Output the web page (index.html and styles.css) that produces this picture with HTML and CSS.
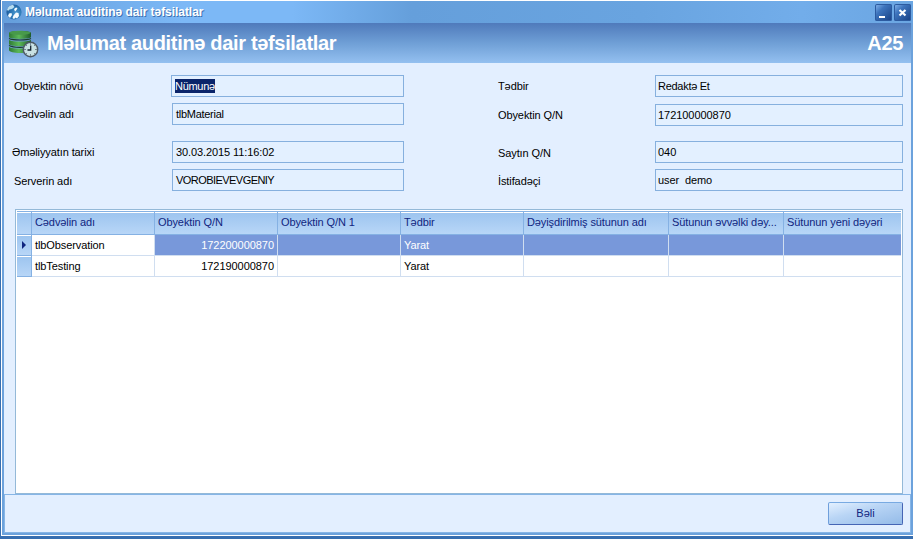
FILE: index.html
```html
<!DOCTYPE html>
<html lang="az">
<head>
<meta charset="utf-8">
<title>Məlumat auditinə dair təfsilatlar</title>
<link rel="stylesheet" href="styles.css">
</head>
<body>
<div class="window">
  <div class="titlebar">
    <svg class="app-icon" width="16" height="16" viewBox="0 0 16 16">
      <defs><radialGradient id="globe" cx="65%" cy="60%" r="65%"><stop offset="0" stop-color="#4d9bd0"/><stop offset=".6" stop-color="#2a76b4"/><stop offset="1" stop-color="#235c9c"/></radialGradient></defs>
      <circle cx="8" cy="8" r="7.6" fill="url(#globe)"/>
      <path d="M1 5.500C2 2.500 4.500 1 7 .8L8.500 3 6 5 3.500 5.500 2 7Z" fill="#b9ddf0"/>
      <path d="M8 5 10 3.500 11.500 4 10.500 6 9 7.500ZM3 9.500 5.500 9 6 11 4 14 2 12ZM7.500 11.500 10 8.500 12.500 9 13 12 11 14.500 9.500 13.500 8 15 6.500 14Z" fill="#f4fbff"/>
    </svg>
    <span class="title">Məlumat auditinə dair təfsilatlar</span>
    <div class="winbtns">
      <span class="winbtn"><svg width="17" height="17" viewBox="0 0 17 17"><path d="M4 12h6v2H4z" fill="#fff"/></svg></span>
      <span class="winbtn"><svg width="17" height="17" viewBox="0 0 17 17"><path d="M5.500 6 11.500 11.500M11.500 6 5.500 11.500" stroke="#fff" stroke-width="2.200"/></svg></span>
    </div>
  </div>
  <div class="banner">
    <svg class="db-icon" width="32" height="28" viewBox="0 0 32 28">
      <defs><linearGradient id="disk"><stop offset="0" stop-color="#2f7a35"/><stop offset=".45" stop-color="#5cb957"/><stop offset="1" stop-color="#1f5a2a"/></linearGradient></defs>
      <g fill="url(#disk)">
        <path d="M1 3C1 0 23 0 23 3V7C23 9.500 1 9.500 1 7Z"/>
        <path d="M1 10C5 12 19 12 23 10V14C23 17 1 17 1 14Z"/>
        <path d="M1 17C5 19 19 19 23 17V20C23 24 1 24 1 20Z"/>
      </g>
      <ellipse cx="12" cy="2.800" rx="10.500" ry="1.900" fill="#48994b"/>
      <path d="M1 8.500C5 10.500 19 10.500 23 8.500M1 15.500C5 18 19 18 23 15.500" fill="none" stroke="#193b2c" stroke-width="1.200"/>
      <circle cx="22.500" cy="19.500" r="7.200" fill="#c9e1e3" stroke="#4d5964" stroke-width="1.400"/>
      <path d="M22.500 13v2M22.500 24v2M16 19.500h2M27 19.500h2M18 15l1 1M27 15l-1 1M18 24l1-1M27 24l-1-1" stroke="#738790"/>
      <path d="M22.700 15.500V20H19.500" fill="none" stroke="#142331" stroke-width="1.300"/>
    </svg>
    <span class="heading">Məlumat auditinə dair təfsilatlar</span>
    <span class="code">A25</span>
  </div>
  <div class="form">
    <div class="fields left">
      <div class="field r1"><label>Obyektin növü</label><div class="input focus"><span class="sel">Nümunə</span></div></div>
      <div class="field r2"><label>Cədvəlin adı</label><div class="input tight">tlbMaterial</div></div>
      <div class="field r3"><label class="outdent">Əməliyyatın tarixi</label><div class="input">30.03.2015 11:16:02</div></div>
      <div class="field r4"><label class="low">Serverin adı</label><div class="input caps">VOROBIEVEVGENIY</div></div>
    </div>
    <div class="fields right">
      <div class="field r1"><label>Tədbir</label><div class="input tight">Redaktə Et</div></div>
      <div class="field r2"><label>Obyektin Q/N</label><div class="input digits">172100000870</div></div>
      <div class="field r3"><label class="low">Saytın Q/N</label><div class="input digits">040</div></div>
      <div class="field r4"><label class="low">İstifadəçi</label><div class="input pre">user  demo</div></div>
    </div>
  </div>
  <div class="table">
    <div class="row head">
      <div class="cell ind"></div><div class="cell">Cədvəlin adı</div><div class="cell">Obyektin Q/N</div><div class="cell">Obyektin Q/N 1</div><div class="cell">Tədbir</div><div class="cell">Dəyişdirilmiş sütunun adı</div><div class="cell">Sütunun əvvəlki dəy...</div><div class="cell">Sütunun yeni dəyəri</div>
    </div>
    <div class="row current">
      <div class="cell ind"><svg width="4" height="8" viewBox="0 0 4 8"><path d="M0 0 4 4 0 8Z" fill="#10257f"/></svg></div><div class="cell">tlbObservation</div><div class="cell num">172200000870</div><div class="cell"></div><div class="cell">Yarat</div><div class="cell"></div><div class="cell"></div><div class="cell"></div>
    </div>
    <div class="row">
      <div class="cell ind"></div><div class="cell">tlbTesting</div><div class="cell num">172190000870</div><div class="cell"></div><div class="cell">Yarat</div><div class="cell"></div><div class="cell"></div><div class="cell"></div>
    </div>
  </div>
  <div class="footer"><button class="ok">Bəli</button></div>
</div>
</body>
</html>
```
FILE: styles.css
```css
* { box-sizing: border-box; }
body {
  margin: 0;
  width: 913px;
  height: 539px;
  overflow: hidden;
  background: #376eb0;
  font: 11px/13px "Liberation Sans", Arial, sans-serif;
  letter-spacing: -0.1px;
  color: #000;
}
.window {
  display: flex;
  flex-direction: column;
  height: 536px;
  margin-left: 1px;
  border: 1px solid #fff;
  border-right: 0;
  background: linear-gradient(#e3efff, #e3efff) 2px 0 / 907px 532px no-repeat #6ca2dc;
}
.titlebar {
  display: flex;
  align-items: center;
  flex: none;
  height: 22px;
  padding: 0 2px 0 4px;
  background: linear-gradient(90deg, #659edb 0, #7cb8f6 180px, #7cb8f6 290px, #659fdb 410px, #69a4e0 640px, #72adea 800px, #6ba6e2 100%);
}
.title {
  margin-left: 3px;
  color: #fff;
  font-size: 12px;
  font-weight: bold;
  letter-spacing: -0.05px;
  text-shadow: 1px 1px #3e70b0;
}
.winbtns { display: flex; gap: 2px; margin-left: auto; }
.winbtn {
  width: 17px;
  height: 17px;
  border-radius: 2px;
  background: linear-gradient(135deg, #8bbaf0, #3d74bd 35%, #173f82);
  box-shadow: inset 0 0 0 1px #2c5ba0;
}
.winbtn svg { display: block; }
.banner {
  display: flex;
  align-items: center;
  flex: none;
  height: 40px;
  margin: 0 2px;
  padding: 0 8px 0 4px;
  background: linear-gradient(#4f7abb, #6f9fd6 50%, #94c0f0);
  color: #fff;
  font-size: 20px;
  line-height: 24px;
  font-weight: bold;
  letter-spacing: -0.33px;
}
.db-icon { margin-top: 2px; }
.heading { margin-left: 7px; }
.code { margin-left: auto; }
.form {
  display: flex;
  flex: none;
  height: 146px;
  padding: 12px 10px 0 12px;
}
.fields.left { width: 390px; margin-right: 94px; }
.fields.right { flex: 1; }
.field { display: flex; align-items: center; height: 22px; }
.field label { flex: 1; padding-top: 1px; }
.field .outdent { margin-left: -2px; margin-right: 2px; }
.field .low { padding-top: 3px; }
.input {
  width: 232px;
  height: 22px;
  padding: 4px 3px 0 2px;
  border: 1px solid #86b0de;
  background: #e3f0ff;
}
.right .input { width: 248px; }
.left .input { padding-left: 3px; }
.input.focus { width: 233px; padding-top: 3px; }
.tight { letter-spacing: -0.28px; }
.caps { letter-spacing: -0.55px; }
.digits, .num { letter-spacing: -0.05px; }
.pre { white-space: pre; }
.sel {
  display: inline-block;
  height: 14px;
  padding-top: 1px;
  background: #0a246a;
  color: #fff;
  letter-spacing: -0.3px;
}
.r2 { margin-top: 6px; }
.r3 { margin-top: 16px; }
.r4 { margin-top: 6px; }
.right .r2 { margin-top: 7px; }
.right .r3 { margin-top: 15px; }
.table {
  flex: none;
  width: 888px;
  height: 285px;
  margin-left: 13px;
  padding: 1px;
  border: 1px solid #94b9d8;
  background: #fff;
}
.row {
  display: grid;
  grid-template-columns: 15px 123px 123px 123px 123px 145px 115px 117px;
  height: 21px;
}
.cell {
  display: flex;
  align-items: center;
  min-width: 0;
  padding: 1px 3px 0;
  border-right: 1px solid #d0def0;
  border-bottom: 1px solid #d0def0;
  white-space: nowrap;
}
.cell:last-child { border-right: 0; }
.head { height: 24px; }
.head .cell, .ind {
  border-color: #85b1e3;
  background: linear-gradient(#9cc4ef, #b8d6f7);
  color: #10257f;
  box-shadow: inset 0 1px #fff;
}
.head .cell { border-top: 1px solid #85b1e3; padding: 0 3px 1px; }
.row .ind { padding: 0; justify-content: center; }
.current .cell:nth-child(n+3) { background: #7898da; color: #fff; }
.cell.num { justify-content: flex-end; }
.footer {
  flex: none;
  width: 907px;
  height: 39px;
  margin-left: 2px;
  padding: 7px 7px 0 0;
  border: 1px solid #86b5e6;
  text-align: right;
}
.ok {
  width: 75px;
  height: 23px;
  padding: 0;
  border: 1px solid;
  border-color: #78aae2 #4565b5 #4565b5 #6f9fdc;
  border-radius: 2px;
  background: linear-gradient(165deg, #e3f0ff 0, #b9d5f5 40%, #94bbe8 100%);
  color: #10257f;
  font: inherit;
}
```
